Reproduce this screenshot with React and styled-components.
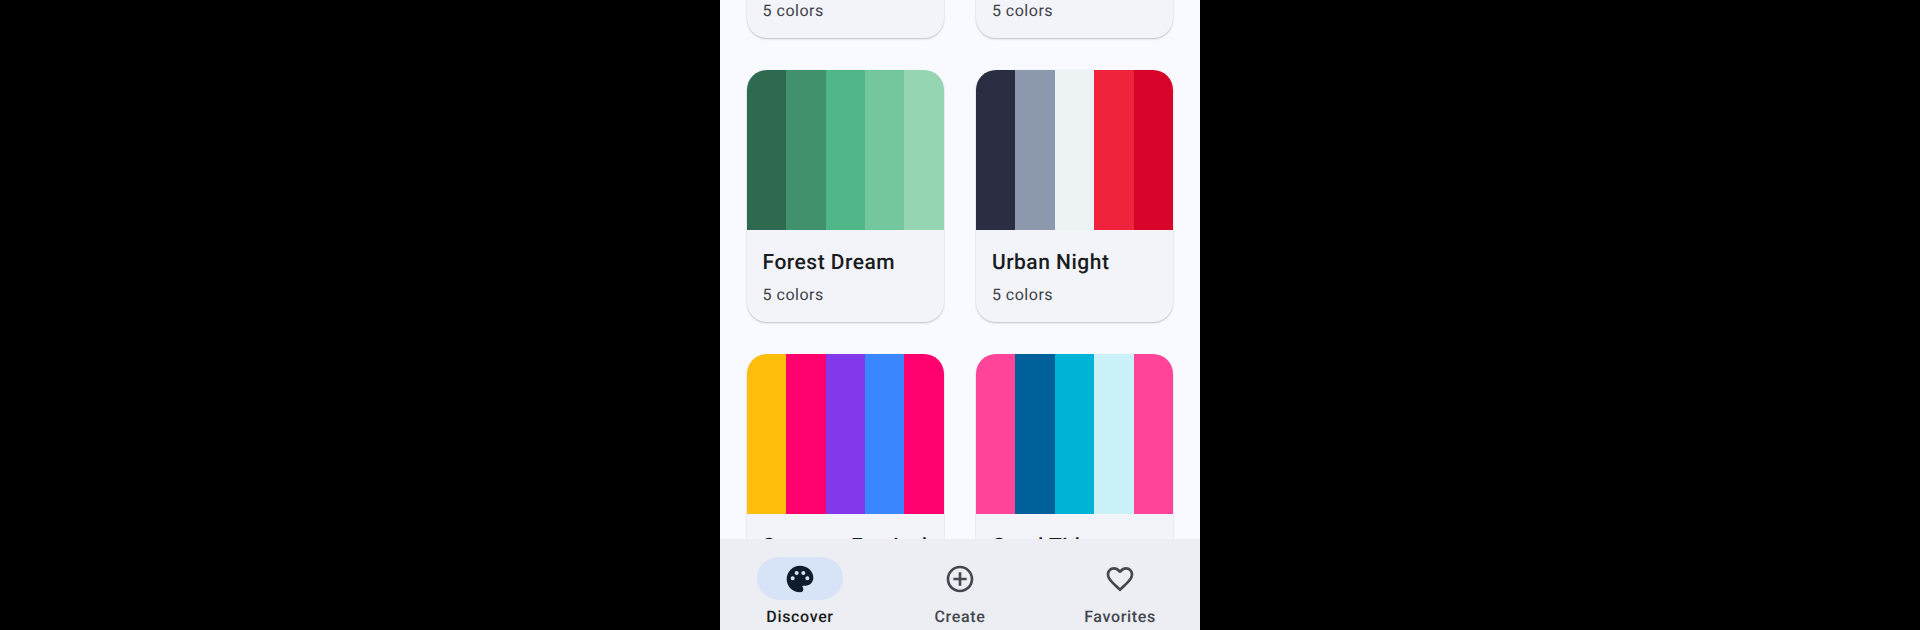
import React from 'react'
import styled, { createGlobalStyle } from 'styled-components'

const palettes = [
   { name: 'Ocean Breeze', colors: ['#03045E', '#0077B6', '#00B4D8', '#90E0EF', '#CAF0F8'] },
   { name: 'Sunset Glow', colors: ['#FF6B35', '#F7931E', '#FDC830', '#F37335', '#C73E1D'] },
   { name: 'Forest Dream', colors: ['#2D6A4F', '#40916C', '#52B788', '#74C69D', '#95D5B2'] },
   { name: 'Urban Night', colors: ['#2B2D42', '#8D99AE', '#EDF2F4', '#EF233C', '#D90429'] },
   { name: 'Summer Festival', colors: ['#FFBE0B', '#FF006E', '#8338EC', '#3A86FF', '#FF006E'] },
   { name: 'Coral Tide', colors: ['#FF4499', '#00619A', '#00B4D8', '#CAF0F8', '#FF4499'] },
]

const PaletteIcon = () => (
   <svg width="32" height="32" viewBox="0 0 24 24" fill="#0F1C2E">
      <path d="M12 2C6.49 2 2 6.49 2 12s4.49 10 10 10a2.5 2.5 0 0 0 2.5-2.5c0-.61-.23-1.2-.64-1.67a.528.528 0 0 1 .4-.83H16c3.31 0 6-2.69 6-6 0-4.96-4.49-9-10-9zM6.5 13a1.5 1.5 0 1 1 0-3 1.5 1.5 0 0 1 0 3zm3-4a1.5 1.5 0 1 1 0-3 1.5 1.5 0 0 1 0 3zm5 0a1.5 1.5 0 1 1 0-3 1.5 1.5 0 0 1 0 3zm3 4a1.5 1.5 0 1 1 0-3 1.5 1.5 0 0 1 0 3z" />
   </svg>
)

const AddIcon = () => (
   <svg width="32" height="32" viewBox="0 0 24 24" fill="#43474E">
      <path d="M13 7h-2v4H7v2h4v4h2v-4h4v-2h-4V7zm-1-5C6.49 2 2 6.49 2 12s4.49 10 10 10 10-4.49 10-10S17.52 2 12 2zm0 18c-4.41 0-8-3.59-8-8s3.59-8 8-8 8 3.59 8 8-3.59 8-8 8z" />
   </svg>
)

const HeartIcon = () => (
   <svg width="32" height="32" viewBox="0 0 24 24" fill="#43474E">
      <path d="M16.5 3c-1.74 0-3.41.81-4.5 2.09C10.91 3.81 9.24 3 7.5 3 4.42 3 2 5.42 2 8.5c0 3.78 3.4 6.86 8.55 11.54L12 21.35l1.45-1.32C18.6 15.36 22 12.28 22 8.5 22 5.42 19.58 3 16.5 3zm-4.4 15.55l-.1.1-.1-.1C7.14 14.24 4 11.39 4 8.5 4 6.5 5.5 5 7.5 5c1.54 0 3.04.99 3.57 2.36h1.87C13.46 5.99 14.96 5 16.5 5c2 0 3.5 1.5 3.5 3.5 0 2.89-3.14 5.74-7.9 10.05z" />
   </svg>
)

const App = () => {
   return (
      <>
         <GlobalStyle />
         <Page>
            <Phone>
               <Scroller>
                  <Grid>
                     {palettes.map((p) => (
                        <Card key={p.name}>
                           <Swatches>
                              {p.colors.map((c, i) => <Swatch key={i} $color={c} />)}
                           </Swatches>
                           <CardInfo>
                              <CardTitle>{p.name}</CardTitle>
                              <CardCount>{p.colors.length} colors</CardCount>
                           </CardInfo>
                        </Card>
                     ))}
                  </Grid>
               </Scroller>
               <NavBar>
                  <NavItem>
                     <Pill $active><PaletteIcon /></Pill>
                     <NavLabel $active>Discover</NavLabel>
                  </NavItem>
                  <NavItem>
                     <Pill><AddIcon /></Pill>
                     <NavLabel>Create</NavLabel>
                  </NavItem>
                  <NavItem>
                     <Pill><HeartIcon /></Pill>
                     <NavLabel>Favorites</NavLabel>
                  </NavItem>
               </NavBar>
            </Phone>
         </Page>
      </>
   )
}

export default App

const GlobalStyle = createGlobalStyle`
   html, body {
      margin: 0;
      height: 100%;
      background: #000;
      font-family: Roboto, "Liberation Sans", sans-serif;
      text-rendering: geometricPrecision;
   }
`
const Page = styled.div`
   height: 630px;
   display: flex;
   justify-content: center;
   overflow: hidden;
`
const Phone = styled.div`
   width: 480px;
   height: 630px;
   background: #F9FAFF;
   display: flex;
   flex-direction: column;
`
const Scroller = styled.div`
   flex: 1;
   min-height: 0;
   overflow: hidden;
`
const Grid = styled.div`
   display: grid;
   grid-template-columns: 1fr 1fr;
   gap: 32px;
   padding: 0 26.8px 0 26.6px;
   margin-top: -214px;
`
const Card = styled.div`
   background: #F3F4FA;
   border-radius: 20px;
   overflow: hidden;
   box-shadow: 0 1px 2px rgba(0, 0, 0, 0.24);
`
const Swatches = styled.div`
   display: flex;
   height: 160px;
`
const Swatch = styled.div`
   flex: 1;
   background: ${(props) => props.$color};
`
const CardInfo = styled.div`
   height: 92px;
   box-sizing: border-box;
   padding: 20px 16px 0;
`
const CardTitle = styled.div`
   font-size: 21px;
   font-weight: 460;
   line-height: 27px;
   letter-spacing: 0.5px;
   white-space: nowrap;
   color: #191C20;
`
const CardCount = styled.div`
   margin-top: 6px;
   font-size: 16px;
   line-height: 24px;
   letter-spacing: 0.5px;
   color: #3A3E45;
`
const NavBar = styled.div`
   height: 91px;
   flex-shrink: 0;
   background: #EDEEF3;
   display: grid;
   grid-template-columns: repeat(3, 1fr);
`
const NavItem = styled.div`
   display: flex;
   flex-direction: column;
   align-items: center;
   padding-top: 18px;
`
const Pill = styled.div`
   width: 86px;
   height: 43px;
   border-radius: 22px;
   display: flex;
   align-items: center;
   justify-content: center;
   background: ${(props) => (props.$active ? '#D7E3F7' : 'transparent')};
`
const NavLabel = styled.div`
   margin-top: 7px;
   font-size: 16px;
   font-weight: 480;
   line-height: 20px;
   letter-spacing: 0.65px;
   color: ${(props) => (props.$active ? '#191C20' : '#43474E')};
`
